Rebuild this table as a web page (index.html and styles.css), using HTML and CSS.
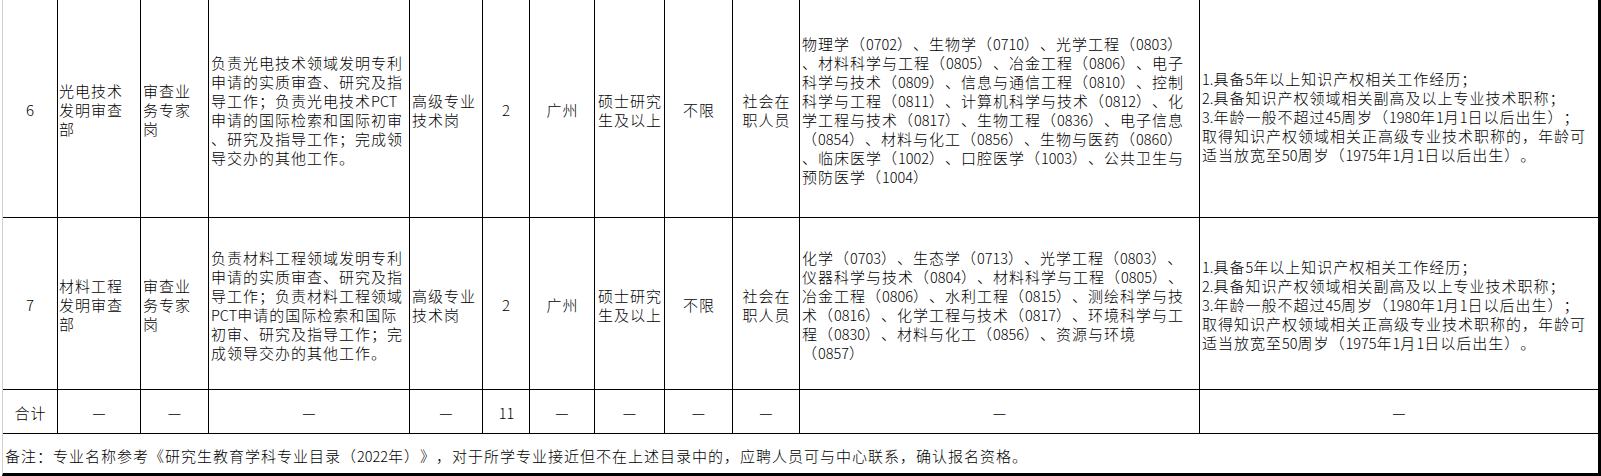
FILE: index.html
```html
<!DOCTYPE html>
<html lang="zh-CN">
<head>
<meta charset="utf-8">
<title>招聘岗位表</title>
<link rel="stylesheet" href="styles.css">
</head>
<body>
<div class="sheet">
  <div class="cell c"><div class="t">6</div></div>
  <div class="cell l p1"><div class="t">光电技术<br>发明审查<br>部</div></div>
  <div class="cell l"><div class="t">审查业<br>务专家<br>岗</div></div>
  <div class="cell l"><div class="t">负责光电技术领域发明专利<br>申请的实质审查、研究及指<br>导工作；负责光电技术<span class="a">PCT</span><br>申请的国际检索和国际初审<br>、研究及指导工作；完成领<br>导交办的其他工作。</div></div>
  <div class="cell l"><div class="t">高级专业<br>技术岗</div></div>
  <div class="cell c"><div class="t">2</div></div>
  <div class="cell c"><div class="t">广州</div></div>
  <div class="cell c"><div class="t">硕士研究<br>生及以上</div></div>
  <div class="cell c"><div class="t">不限</div></div>
  <div class="cell c"><div class="t">社会在<br>职人员</div></div>
  <div class="cell l"><div class="t">物理学（<span class="a">0702</span>）、生物学（<span class="a">0710</span>）、光学工程（<span class="a">0803</span>）<br>、材料科学与工程（<span class="a">0805</span>）、冶金工程（<span class="a">0806</span>）、电子<br>科学与技术（<span class="a">0809</span>）、信息与通信工程（<span class="a">0810</span>）、控制<br>科学与工程（<span class="a">0811</span>）、计算机科学与技术（<span class="a">0812</span>）、化<br>学工程与技术（<span class="a">0817</span>）、生物工程（<span class="a">0836</span>）、电子信息<br>（<span class="a">0854</span>）、材料与化工（<span class="a">0856</span>）、生物与医药（<span class="a">0860</span>）<br>、临床医学（<span class="a">1002</span>）、口腔医学（<span class="a">1003</span>）、公共卫生与<br>预防医学（<span class="a">1004</span>）</div></div>
  <div class="cell l low"><div class="t"><span class="a">1.</span>具备<span class="a">5</span>年以上知识产权相关工作经历；<br><span class="a">2.</span>具备知识产权领域相关副高及以上专业技术职称；<br><span class="a">3.</span>年龄一般不超过<span class="a">45</span>周岁（<span class="a">1980</span>年<span class="a">1</span>月<span class="a">1</span>日以后出生）；<br>取得知识产权领域相关正高级专业技术职称的，年龄可<br>适当放宽至<span class="a">50</span>周岁（<span class="a">1975</span>年<span class="a">1</span>月<span class="a">1</span>日以后出生）。</div></div>

  <div class="cell c"><div class="t">7</div></div>
  <div class="cell l p1"><div class="t">材料工程<br>发明审查<br>部</div></div>
  <div class="cell l"><div class="t">审查业<br>务专家<br>岗</div></div>
  <div class="cell l"><div class="t">负责材料工程领域发明专利<br>申请的实质审查、研究及指<br>导工作；负责材料工程领域<br><span class="a">PCT</span>申请的国际检索和国际<br>初审、研究及指导工作；完<br>成领导交办的其他工作。</div></div>
  <div class="cell l"><div class="t">高级专业<br>技术岗</div></div>
  <div class="cell c"><div class="t">2</div></div>
  <div class="cell c"><div class="t">广州</div></div>
  <div class="cell c"><div class="t">硕士研究<br>生及以上</div></div>
  <div class="cell c"><div class="t">不限</div></div>
  <div class="cell c"><div class="t">社会在<br>职人员</div></div>
  <div class="cell l"><div class="t">化学（<span class="a">0703</span>）、生态学（<span class="a">0713</span>）、光学工程（<span class="a">0803</span>）、<br>仪器科学与技术（<span class="a">0804</span>）、材料科学与工程（<span class="a">0805</span>）、<br>冶金工程（<span class="a">0806</span>）、水利工程（<span class="a">0815</span>）、测绘科学与技<br>术（<span class="a">0816</span>）、化学工程与技术（<span class="a">0817</span>）、环境科学与工<br>程（<span class="a">0830</span>）、材料与化工（<span class="a">0856</span>）、资源与环境<br>（<span class="a">0857</span>）</div></div>
  <div class="cell l"><div class="t"><span class="a">1.</span>具备<span class="a">5</span>年以上知识产权相关工作经历；<br><span class="a">2.</span>具备知识产权领域相关副高及以上专业技术职称；<br><span class="a">3.</span>年龄一般不超过<span class="a">45</span>周岁（<span class="a">1980</span>年<span class="a">1</span>月<span class="a">1</span>日以后出生）；<br>取得知识产权领域相关正高级专业技术职称的，年龄可<br>适当放宽至<span class="a">50</span>周岁（<span class="a">1975</span>年<span class="a">1</span>月<span class="a">1</span>日以后出生）。</div></div>

  <div class="cell c"><div class="t">合计</div></div>
  <div class="cell c"><div class="t">—</div></div>
  <div class="cell c"><div class="t">—</div></div>
  <div class="cell c"><div class="t">—</div></div>
  <div class="cell c"><div class="t">—</div></div>
  <div class="cell c"><div class="t"><span class="a">11</span></div></div>
  <div class="cell c"><div class="t">—</div></div>
  <div class="cell c"><div class="t">—</div></div>
  <div class="cell c"><div class="t">—</div></div>
  <div class="cell c"><div class="t">—</div></div>
  <div class="cell c"><div class="t">—</div></div>
  <div class="cell c"><div class="t">—</div></div>

  <div class="cell l note"><div class="t">备注：专业名称参考《研究生教育学科专业目录（<span class="a">2022</span>年）》，对于所学专业接近但不在上述目录中的，应聘人员可与中心联系，确认报名资格。</div></div>
</div>
</body>
</html>
```

FILE: styles.css
```css
html, body {
  margin: 0;
  padding: 0;
  background: #fff;
}

body {
  font-family: "Noto Sans CJK SC", "Noto Sans", sans-serif;
  font-size: 15px;
  font-weight: 300;
  line-height: 19px;
  letter-spacing: 1px;
  text-spacing-trim: space-all;
  color: #000;
}

.sheet {
  display: grid;
  width: max-content;
  margin-left: 2px;
  grid-template-columns: 54px 82px 67px 200px 72px 46px 64px 69px 67px 66px 399px 398px;
  grid-template-rows: 217px 171px 43px 39px;
  gap: 1px;
  background: #000;
  border-left: 1px solid #d0d0d0;
  border-right: 3px solid #000;
  border-bottom: 3px solid #000;
}

.cell {
  background: #fff;
  display: flex;
  flex-direction: column;
  justify-content: center;
  padding-top: 2px;
  white-space: nowrap;
  overflow: hidden;
}

.c {
  text-align: center;
  padding-left: 1px;
}

.l {
  text-align: left;
  padding-left: 2px;
}

.p1 {
  padding-left: 1px;
}

.low {
  padding-top: 15px;
}

.note {
  grid-column: 1 / -1;
  padding-left: 2px;
  padding-top: 4px;
}

.a {
  font-size: 14.5px;
  letter-spacing: 0;
}
```
